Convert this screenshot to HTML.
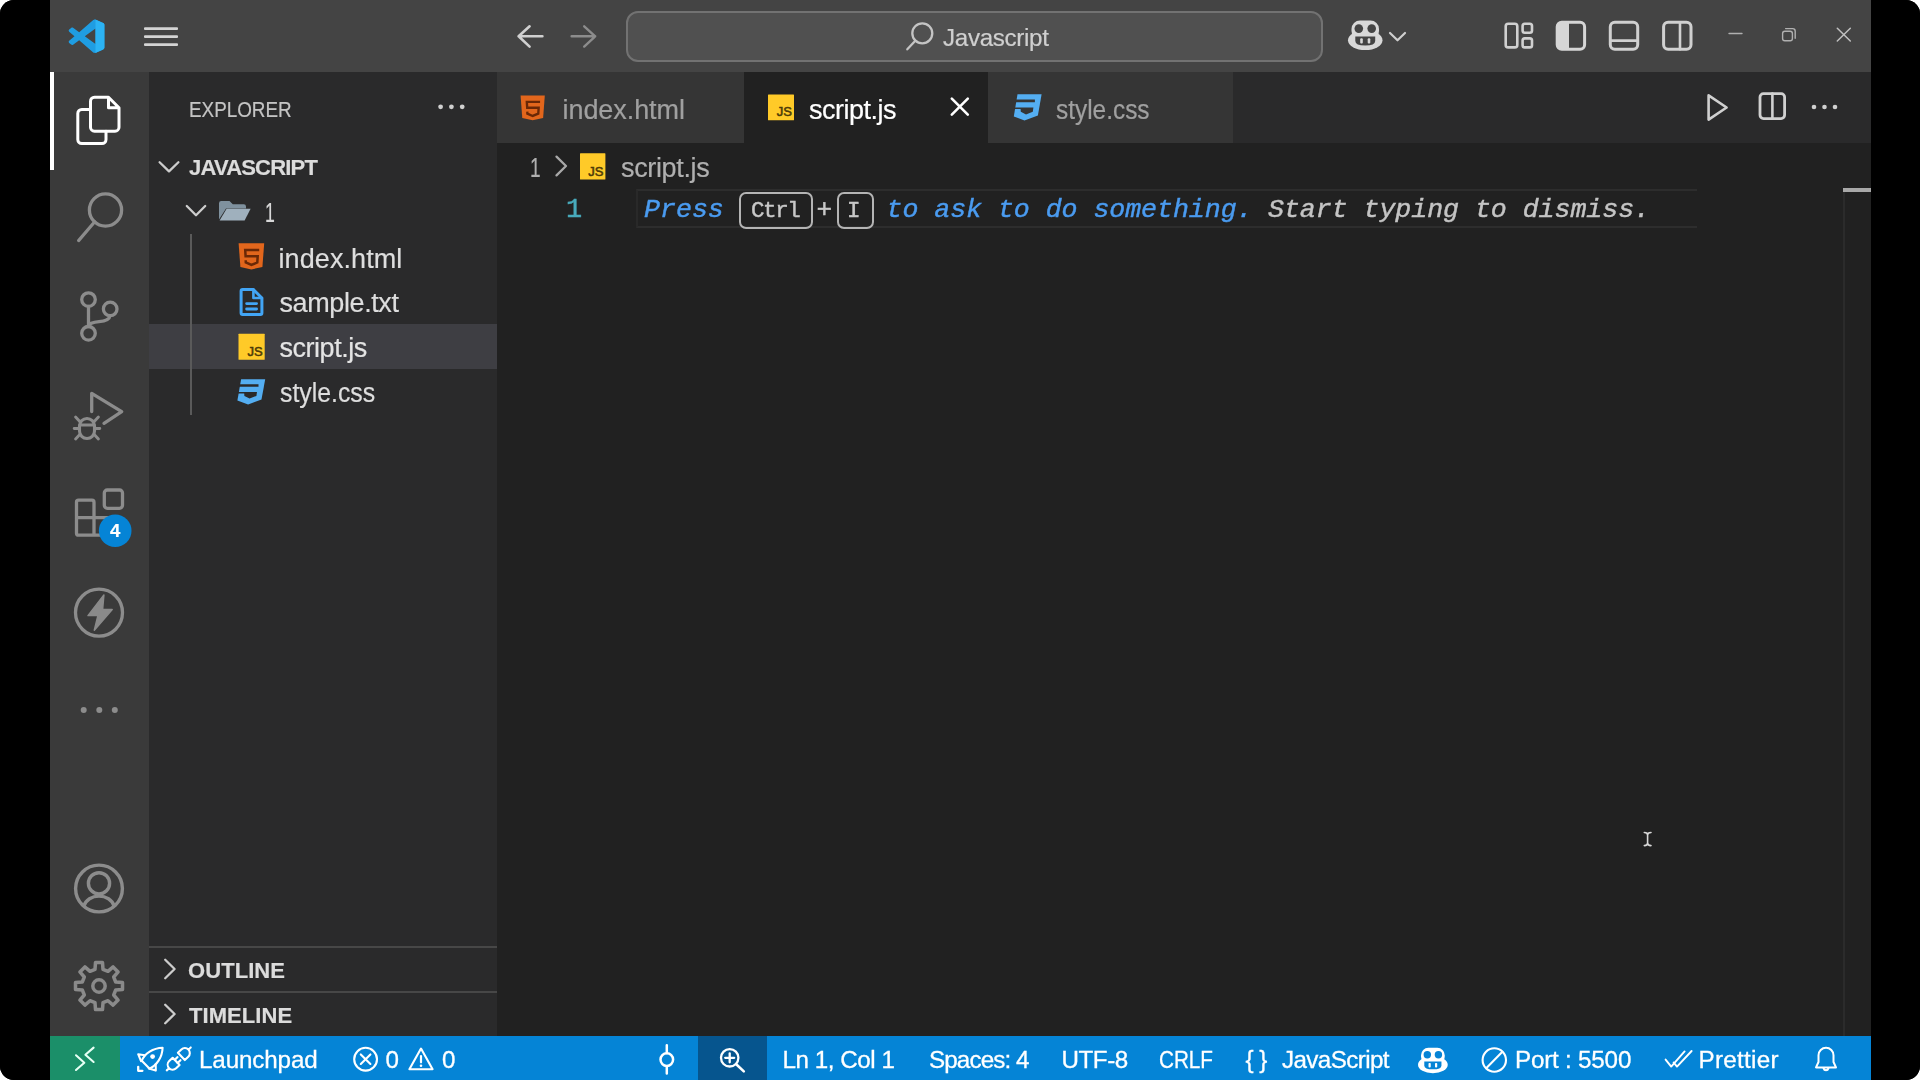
<!DOCTYPE html>
<html lang="en"><head><meta charset="utf-8"><title>script.js - Javascript - Visual Studio Code</title>
<style>
html,body{margin:0;padding:0;}
body{width:1920px;height:1080px;overflow:hidden;background:#fff;font-family:"Liberation Sans",sans-serif;}
#frame{position:absolute;left:0;top:0;width:1920px;height:1080px;background:#000;border-radius:14px;overflow:hidden;}
.abs{position:absolute;}
#titlebar{left:50px;top:0;width:1821px;height:72px;background:#444444;}
#search{left:625.5px;top:10.5px;width:693px;height:47px;border:2px solid #727272;border-radius:12px;background:#505050;}
#activity{left:50px;top:72px;width:99px;height:964px;background:#3a3a3a;}
#activeind{left:50px;top:72px;width:4px;height:98px;background:#fff;}
#sidebar{left:149px;top:72px;width:348px;height:964px;background:#2a2a2b;}
#selrow{left:149px;top:324px;width:348px;height:45px;background:#3e3e43;}
#guide{left:190px;top:234px;width:1.5px;height:181px;background:#5a5a5a;}
.sep{left:149px;width:348px;height:2px;background:#474747;}
#tabsbar{left:497px;top:72px;width:1374px;height:71px;background:#2a2a2b;}
.tab{top:72px;height:71px;background:#353535;}
#tabactive{left:744px;top:72px;width:244px;height:71px;background:#212121;}
#editor{left:497px;top:143px;width:1374px;height:893px;background:#212121;}
#curline{left:636px;top:189px;width:1059px;height:35px;border-top:2px solid #2d2d2d;border-bottom:2px solid #2d2d2d;border-left:2px solid #292929;}
#sbline{left:1842.5px;top:190px;width:2px;height:846px;background:#2b2b2b;}
#sbmark{left:1843px;top:188px;width:28px;height:4px;background:#a8a8a8;}
#status{left:50px;top:1036px;width:1821px;height:44px;background:#0584d6;}
#remote{left:50px;top:1036px;width:70px;height:44px;background:#1b8f69;}
#zoomitem{left:698px;top:1036px;width:69px;height:44px;background:#06558e;}
.kbd{border:2px solid #b4b4b4;border-radius:7px;box-sizing:border-box;}
#txt{position:absolute;left:0;top:0;width:1920px;height:1080px;will-change:transform;}
.t{position:absolute;white-space:nowrap;line-height:1em;-webkit-text-stroke:0.2px currentColor;}
.m{font-family:"Liberation Mono",monospace;-webkit-text-stroke:0.45px currentColor;}
.sb{-webkit-text-stroke:0.3px currentColor;}
#icons{position:absolute;left:0;top:0;}
</style></head>
<body>
<div id="frame">

<div id="titlebar" class="abs"></div>
<div id="search" class="abs"></div>
<div id="activity" class="abs"></div>
<div id="activeind" class="abs"></div>
<div id="sidebar" class="abs"></div>
<div id="selrow" class="abs"></div>
<div id="guide" class="abs"></div>
<div class="abs sep" style="top:946px"></div>
<div class="abs sep" style="top:991px"></div>
<div id="tabsbar" class="abs"></div>
<div class="abs tab" style="left:497px;width:247px"></div>
<div id="tabactive" class="abs"></div>
<div class="abs tab" style="left:988px;width:245px"></div>
<div id="editor" class="abs"></div>
<div id="curline" class="abs"></div>
<div id="sbline" class="abs"></div>
<div id="sbmark" class="abs"></div>
<div id="status" class="abs"></div>
<div id="remote" class="abs"></div>
<div id="zoomitem" class="abs"></div>
<div class="abs kbd" style="left:738.5px;top:191.5px;width:74.5px;height:37px"></div>
<div class="abs kbd" style="left:837px;top:191.5px;width:36.5px;height:37px"></div>

<svg id="icons" width="1920" height="1080" viewBox="0 0 1920 1080">
<g transform="translate(68.7 19.4) scale(0.357 0.337)"><path d="M70.9119 99.3171C72.4869 99.9307 74.2828 99.8914 75.8725 99.1264L96.4608 89.2197C98.6242 88.1787 100 85.9892 100 83.5872V16.4133C100 14.0113 98.6243 11.8218 96.4609 10.7808L75.8725 0.873756C73.7862 -0.130129 71.3446 0.11576 69.5135 1.44695C69.252 1.63711 69.0028 1.84943 68.769 2.08341L29.3551 38.0415L12.1872 25.0096C10.589 23.7965 8.35363 23.8959 6.86933 25.2461L1.36303 30.2549C-0.452552 31.9064 -0.454633 34.7627 1.35853 36.417L16.2471 50.0001L1.35853 63.5832C-0.454633 65.2374 -0.452552 68.0938 1.36303 69.7453L6.86933 74.7541C8.35363 76.1043 10.589 76.2037 12.1872 74.9905L29.3551 61.9587L68.769 97.9167C69.3925 98.5406 70.1246 99.0104 70.9119 99.3171ZM75.0152 27.2989L45.1091 50.0001L75.0152 72.7012V27.2989Z" fill="#1f9de2" fill-rule="evenodd"/><path d="M75 0.5 L96.46 10.78 C98.62 11.82 100 14 100 16.4 V83.6 C100 86 98.62 88.18 96.46 89.22 L75 99.5 Z" fill="#2cb3f4"/></g>
<rect x="144" y="27.3" width="34" height="2.6" rx="1" fill="#d4d4d4" stroke="none" stroke-width="0"/>
<rect x="144" y="35.300000000000004" width="34" height="2.6" rx="1" fill="#d4d4d4" stroke="none" stroke-width="0"/>
<rect x="144" y="43.300000000000004" width="34" height="2.6" rx="1" fill="#d4d4d4" stroke="none" stroke-width="0"/>
<path d="M542.4 36.3 H518.6 M529.6 26.3 L518.6 36.3 L529.6 46.6" fill="none" stroke="#d0d0d0" stroke-width="2.6" stroke-linecap="round" stroke-linejoin="round" />
<path d="M571.6 36.3 H595.2 M584.2 26.3 L595.2 36.3 L584.2 46.6" fill="none" stroke="#8c8c8c" stroke-width="2.4" stroke-linecap="round" stroke-linejoin="round" />
<circle cx="922.3" cy="33.3" r="10" fill="none" stroke="#c4c4c4" stroke-width="2.3"/>
<path d="M915.3 40.8 L907.3 49.3" fill="none" stroke="#c4c4c4" stroke-width="2.3" stroke-linecap="round" stroke-linejoin="round" />
<g transform="translate(1348 20.6) scale(1.0)"><rect x="3.5" y="0" width="27.5" height="19" rx="8.5" fill="#d8d8d8"/><ellipse cx="17.25" cy="19.6" rx="17.25" ry="9.8" fill="#d8d8d8"/><circle cx="10.8" cy="8" r="4.3" fill="#444444"/><circle cx="23.7" cy="8" r="4.3" fill="#444444"/><path d="M7.3 15.8 H27.2 V20.5 Q27.2 25 17.25 25 Q7.3 25 7.3 20.5 Z" fill="#444444"/><rect x="12.2" y="17.6" width="2.6" height="5.2" rx="1" fill="#d8d8d8"/><rect x="19.7" y="17.6" width="2.6" height="5.2" rx="1" fill="#d8d8d8"/></g>
<path d="M1390 33 L1397.5 40.3 L1405 33" fill="none" stroke="#cfcfcf" stroke-width="2.2" stroke-linecap="round" stroke-linejoin="round" />
<rect x="1505.7" y="23.8" width="11.6" height="23.6" rx="2.5" fill="none" stroke="#d0d0d0" stroke-width="2.6"/>
<rect x="1522.6" y="23.8" width="9.4" height="9" rx="2.2" fill="none" stroke="#d0d0d0" stroke-width="2.6"/>
<rect x="1522.6" y="38.4" width="9.4" height="9" rx="2.2" fill="none" stroke="#d0d0d0" stroke-width="2.6"/>
<rect x="1557.2" y="22.2" width="27.4" height="27" rx="4.5" fill="none" stroke="#d6d6d6" stroke-width="3"/>
<path d="M1561.5 22.2 H1569 V49.2 H1561.5 Q1557.2 49.2 1557.2 44.8 V26.6 Q1557.2 22.2 1561.5 22.2 Z" fill="#d6d6d6"/>
<rect x="1610.3" y="22.2" width="27.4" height="27" rx="4.5" fill="none" stroke="#d0d0d0" stroke-width="3"/>
<path d="M1610.3 40.6 H1637.7" fill="none" stroke="#d0d0d0" stroke-width="2.6" stroke-linecap="round" stroke-linejoin="round" />
<rect x="1663.6" y="22.2" width="27.4" height="27" rx="4.5" fill="none" stroke="#d0d0d0" stroke-width="3"/>
<path d="M1680 22.2 V49.2" fill="none" stroke="#d0d0d0" stroke-width="2.6" stroke-linecap="round" stroke-linejoin="round" />
<path d="M1729 33.5 H1742" fill="none" stroke="#b0b0b0" stroke-width="1.4" stroke-linecap="round" stroke-linejoin="round" />
<rect x="1782.6" y="31.2" width="9.8" height="9.6" rx="2.2" fill="none" stroke="#b0b0b0" stroke-width="1.4"/>
<path d="M1785.6 28.6 H1792.6 Q1795.2 28.6 1795.2 31.2 V38.2" fill="none" stroke="#b0b0b0" stroke-width="1.4" stroke-linecap="round" stroke-linejoin="round" />
<path d="M1837.3 28.2 L1850.3 41 M1850.3 28.2 L1837.3 41" fill="none" stroke="#c0c0c0" stroke-width="1.5" stroke-linecap="round" stroke-linejoin="round" />
<path d="M94.5 97.2 H108.5 L119 107.7 V127.2 A4 4 0 0 1 115 131.2 H94.5 A4 4 0 0 1 90.5 127.2 V101.2 A4 4 0 0 1 94.5 97.2 Z M108.5 97.2 V107.7 H119" fill="none" stroke="#ffffff" stroke-width="3" stroke-linecap="round" stroke-linejoin="round" />
<path d="M90.5 109.5 H81.8 A4 4 0 0 0 77.8 113.5 V139.5 A4 4 0 0 0 81.8 143.5 H102 A4 4 0 0 0 106 139.5 V131.2" fill="none" stroke="#ffffff" stroke-width="3" stroke-linecap="round" stroke-linejoin="round" />
<circle cx="105.5" cy="210" r="16.1" fill="none" stroke="#8c8c8c" stroke-width="3.3"/>
<path d="M94.7 221.8 L78.6 240.6" fill="none" stroke="#8c8c8c" stroke-width="3.2" stroke-linecap="round" stroke-linejoin="round" />
<circle cx="88.5" cy="299.6" r="6.8" fill="none" stroke="#8c8c8c" stroke-width="3.3"/>
<circle cx="110.2" cy="308.9" r="6.8" fill="none" stroke="#8c8c8c" stroke-width="3.3"/>
<circle cx="88.5" cy="333.3" r="6.8" fill="none" stroke="#8c8c8c" stroke-width="3.3"/>
<path d="M88.5 306.4 V326.5 M110 315.7 C109.5 320.5 104 321.3 99 321.6 C94 322 89.5 322.6 88.5 326" fill="none" stroke="#8c8c8c" stroke-width="3.3" stroke-linecap="round" stroke-linejoin="round" />
<path d="M91.7 411.5 V393.3 L121.7 411.7 L104 423.3" fill="none" stroke="#8c8c8c" stroke-width="3.3" stroke-linecap="round" stroke-linejoin="round" />
<path d="M79.5 428.5 V426 A7.5 7.5 0 0 1 94.5 426 V431 A7.5 7.5 0 0 1 79.5 431 Z M79.5 425 H94.5" fill="none" stroke="#8c8c8c" stroke-width="3.1" stroke-linecap="round" stroke-linejoin="round" />
<path d="M79.8 421.5 L75.6 417 M94.2 421.5 L98.4 417 M79 428.5 H74.2 M95 428.5 H99.8 M79.8 434.5 L75.6 439 M94.2 434.5 L98.4 439" fill="none" stroke="#8c8c8c" stroke-width="2.9" stroke-linecap="round" stroke-linejoin="round" />
<path d="M78.5 500.2 H92 Q94 500.2 94 502.2 V517.7 H109.5 Q111.5 517.7 111.5 519.7 V533.2 Q111.5 535.2 109.5 535.2 H78.5 Q76.5 535.2 76.5 533.2 V502.2 Q76.5 500.2 78.5 500.2 Z M76.5 517.7 H94 V535.2" fill="none" stroke="#8c8c8c" stroke-width="3.3" stroke-linecap="round" stroke-linejoin="round" />
<rect x="104.3" y="490" width="18.2" height="18.3" rx="3" fill="none" stroke="#8c8c8c" stroke-width="3.3"/>
<circle cx="115.2" cy="530.7" r="16.3" fill="#0584d6" stroke="none" stroke-width="0"/>
<circle cx="99" cy="612.6" r="23.5" fill="none" stroke="#8c8c8c" stroke-width="3.3"/>
<path d="M103.9 595 L88 615.6 H97.9 L94.3 630.2 L112.2 609.6 H102.6 Z" fill="#8a8a8a" stroke="#8a8a8a" stroke-width="1.5" stroke-linejoin="round"/>
<circle cx="83.7" cy="710" r="3" fill="#8c8c8c" stroke="none" stroke-width="0"/>
<circle cx="99.3" cy="710" r="3" fill="#8c8c8c" stroke="none" stroke-width="0"/>
<circle cx="114.8" cy="710" r="3" fill="#8c8c8c" stroke="none" stroke-width="0"/>
<circle cx="99" cy="888.5" r="23.4" fill="none" stroke="#8c8c8c" stroke-width="3.4"/>
<circle cx="99" cy="883.3" r="10.6" fill="none" stroke="#8c8c8c" stroke-width="3.4"/>
<path d="M84 905.8 A15.5 13 0 0 1 114 905.8" fill="none" stroke="#8c8c8c" stroke-width="3.4" stroke-linecap="round" stroke-linejoin="round" />
<path d="M95.0 969.3 L95.5 962.5 L102.5 962.5 L103.0 969.3 L108.0 971.3 L113.1 966.9 L118.1 971.9 L113.7 977.0 L115.7 982.0 L122.5 982.5 L122.5 989.5 L115.7 990.0 L113.7 995.0 L118.1 1000.1 L113.1 1005.1 L108.0 1000.7 L103.0 1002.7 L102.5 1009.5 L95.5 1009.5 L95.0 1002.7 L90.0 1000.7 L84.9 1005.1 L79.9 1000.1 L84.3 995.0 L82.3 990.0 L75.5 989.5 L75.5 982.5 L82.3 982.0 L84.3 977.0 L79.9 971.9 L84.9 966.9 L90.0 971.3 Z" fill="none" stroke="#8a8a8a" stroke-width="3.5" stroke-linecap="round" stroke-linejoin="round" /><circle cx="99" cy="986" r="6.2" fill="none" stroke="#8a8a8a" stroke-width="3.5"/>
<circle cx="440.6" cy="106.8" r="2.4" fill="#d0d0d0" stroke="none" stroke-width="0"/>
<circle cx="451.4" cy="106.8" r="2.4" fill="#d0d0d0" stroke="none" stroke-width="0"/>
<circle cx="462.2" cy="106.8" r="2.4" fill="#d0d0d0" stroke="none" stroke-width="0"/>
<path d="M159.6 162.2 L169 171.4 L178.4 162.2" fill="none" stroke="#cccccc" stroke-width="2.3" stroke-linecap="round" stroke-linejoin="round" />
<path d="M186.8 206 L196 215.2 L205.2 206" fill="none" stroke="#cccccc" stroke-width="2.3" stroke-linecap="round" stroke-linejoin="round" />
<path d="M165.2 959.8 L174.6 969 L165.2 978.2" fill="none" stroke="#cccccc" stroke-width="2.3" stroke-linecap="round" stroke-linejoin="round" />
<path d="M165.2 1004.8 L174.6 1014 L165.2 1023.2" fill="none" stroke="#cccccc" stroke-width="2.3" stroke-linecap="round" stroke-linejoin="round" />
<path d="M219 203.2 Q219 201 221.2 201 H229.5 L232.8 204.3 H243.8 Q246 204.3 246 206.5 V208.6 H226 L219 219.5 Z" fill="#7f919e"/>
<path d="M226.6 208.8 H250.6 L244.6 220.6 H219.6 Z" fill="#9fb0bd"/>
<g transform="translate(238 242) scale(1.0000 1.0000)"><path d="M0.6 1.2 H26.2 L24.4 25 L13.4 27.4 L2.4 25 Z" fill="#e2661c"/><path d="M21.2 8 H7.2 L7.6 14.2 H19.7 L19.3 20.5 L13.4 22.9 L7.8 20.5 L7.7 18.3" fill="none" stroke="#6a2806" stroke-width="2.5" stroke-linejoin="miter"/></g>
<path d="M242.6 289.5 H253.4 L261.9 298 V313 Q261.9 314.5 260.4 314.5 H242.6 Q241.1 314.5 241.1 313 V291 Q241.1 289.5 242.6 289.5 Z" fill="none" stroke="#42a5f5" stroke-width="3" stroke-linecap="round" stroke-linejoin="round" /><path d="M253.4 289.5 V298 H261.9" fill="none" stroke="#42a5f5" stroke-width="2.6" stroke-linecap="round" stroke-linejoin="round" /><path d="M246.6 303.6 H256.6 M246.6 309 H256.6" fill="none" stroke="#42a5f5" stroke-width="2.8" stroke-linecap="round" stroke-linejoin="round" />
<rect x="238.5" y="333.8" width="26.2" height="26" rx="0.5" fill="#ffca28" stroke="none" stroke-width="0"/><text x="262.7" y="355.8" text-anchor="end" font-family="Liberation Sans, sans-serif" font-size="13" fill="#4d3b08" stroke="#4d3b08" stroke-width="0.55">JS</text>
<g transform="translate(237 379) scale(1.0000 1.0000)"><path d="M4.1 0.3 H28.2 L24.5 20.6 L11.1 25.4 L0.4 21.4 Z" fill="#54aef2"/><path d="M2.2 5.3 H21.5 V7.8 H1.8 Z" fill="#2a2a2b"/><path d="M0.8 13 H20 L19.4 16.9 L12.6 19.6 L7.4 16.9 L7.2 14.4 H0.6 Z" fill="#2a2a2b"/></g>
<g transform="translate(520 94.4) scale(0.9470 0.9416)"><path d="M0.6 1.2 H26.2 L24.4 25 L13.4 27.4 L2.4 25 Z" fill="#e2661c"/><path d="M21.2 8 H7.2 L7.6 14.2 H19.7 L19.3 20.5 L13.4 22.9 L7.8 20.5 L7.7 18.3" fill="none" stroke="#6a2806" stroke-width="2.5" stroke-linejoin="miter"/></g>
<rect x="768" y="94.6" width="26" height="25.6" rx="0.5" fill="#ffca28" stroke="none" stroke-width="0"/><text x="792" y="116.19999999999999" text-anchor="end" font-family="Liberation Sans, sans-serif" font-size="13" fill="#4d3b08" stroke="#4d3b08" stroke-width="0.55">JS</text>
<g transform="translate(1013.4 94) scale(1.0000 1.0472)"><path d="M4.1 0.3 H28.2 L24.5 20.6 L11.1 25.4 L0.4 21.4 Z" fill="#54aef2"/><path d="M2.2 5.3 H21.5 V7.8 H1.8 Z" fill="#353535"/><path d="M0.8 13 H20 L19.4 16.9 L12.6 19.6 L7.4 16.9 L7.2 14.4 H0.6 Z" fill="#353535"/></g>
<path d="M951.8 98.6 L967.8 114.6 M967.8 98.6 L951.8 114.6" fill="none" stroke="#ffffff" stroke-width="2.6" stroke-linecap="round" stroke-linejoin="round" />
<path d="M1708.6 95.4 L1726.6 107.5 L1708.6 119.6 Z" fill="none" stroke="#d0d0d0" stroke-width="2.6" stroke-linecap="round" stroke-linejoin="round" />
<rect x="1760" y="93.6" width="24.6" height="25" rx="3.5" fill="none" stroke="#d0d0d0" stroke-width="2.8"/>
<path d="M1772.4 93.6 V118.6" fill="none" stroke="#d0d0d0" stroke-width="2.6" stroke-linecap="round" stroke-linejoin="round" />
<circle cx="1814" cy="107" r="2.3" fill="#d0d0d0" stroke="none" stroke-width="0"/>
<circle cx="1824.5" cy="107" r="2.3" fill="#d0d0d0" stroke="none" stroke-width="0"/>
<circle cx="1835" cy="107" r="2.3" fill="#d0d0d0" stroke="none" stroke-width="0"/>
<path d="M556.5 156.6 L566 166 L556.5 175.4" fill="none" stroke="#a8a8a8" stroke-width="2.3" stroke-linecap="round" stroke-linejoin="round" />
<rect x="580" y="153.2" width="25.4" height="26.4" rx="0.5" fill="#ffca28" stroke="none" stroke-width="0"/><text x="603.4" y="175.6" text-anchor="end" font-family="Liberation Sans, sans-serif" font-size="13" fill="#4d3b08" stroke="#4d3b08" stroke-width="0.55">JS</text>
<path d="M1644.3 832.5 Q1647.6 832.5 1647.6 835 V843 Q1647.6 845.6 1644.3 845.6 M1651 832.5 Q1647.6 832.5 1647.6 835 M1651 845.6 Q1647.6 845.6 1647.6 843" fill="none" stroke="#d8d8d8" stroke-width="1.6" stroke-linecap="round" stroke-linejoin="round" />
<path d="M76 1055.3 L84.3 1062.7 L76 1070" fill="none" stroke="#e6fff4" stroke-width="2.1" stroke-linecap="round" stroke-linejoin="round" />
<path d="M93.6 1047.6 L85.4 1054.8 L93.6 1062" fill="none" stroke="#e6fff4" stroke-width="2.1" stroke-linecap="round" stroke-linejoin="round" />
<path d="M162.6 1047.7 C153 1048 144.6 1053.4 141.8 1060.7 L149.4 1068.6 C156.6 1065.6 162.3 1057.4 162.6 1047.7 Z" fill="none" stroke="#ffffff" stroke-width="2.1" stroke-linecap="round" stroke-linejoin="round" />
<circle cx="152.6" cy="1056.6" r="2.4" fill="#ffffff" stroke="none" stroke-width="0"/>
<path d="M144.8 1055.2 L138.2 1054.2 L141 1061.2 M155.7 1064.4 L155.8 1070.6 L148.8 1068.6" fill="none" stroke="#ffffff" stroke-width="2.1" stroke-linecap="round" stroke-linejoin="round" />
<path d="M138.2 1066.8 V1070.8 H142.4" fill="none" stroke="#ffffff" stroke-width="2.3" stroke-linecap="round" stroke-linejoin="round" />
<g transform="translate(178.75 1058.9) rotate(-43.7)" fill="none" stroke="#ffffff" stroke-width="2.1" stroke-linecap="round" stroke-linejoin="round"><path d="M3.6 -5 H8.4 A5 5 0 0 1 8.4 5 H3.6 Z M13.4 0 H16.6"/><path d="M-3.6 -5 H-8.4 A5 5 0 0 0 -8.4 5 H-3.6 Z M-13.4 0 H-16.6"/><path d="M-3.6 -2.1 H0.4 M-3.6 2.1 H0.4"/></g>
<circle cx="365.6" cy="1059.2" r="11.4" fill="none" stroke="#ffffff" stroke-width="2.1"/>
<path d="M360.8 1054.4 L370.4 1064 M370.4 1054.4 L360.8 1064" fill="none" stroke="#ffffff" stroke-width="2.1" stroke-linecap="round" stroke-linejoin="round" />
<path d="M421 1048.6 L432.6 1069.2 H409.4 Z" fill="none" stroke="#ffffff" stroke-width="2.1" stroke-linecap="round" stroke-linejoin="round" />
<path d="M421 1056 V1062.3" fill="none" stroke="#ffffff" stroke-width="2.2" stroke-linecap="round" stroke-linejoin="round" />
<circle cx="421" cy="1065.7" r="1.3" fill="#ffffff" stroke="none" stroke-width="0"/>
<circle cx="666.8" cy="1059.6" r="6.3" fill="none" stroke="#ffffff" stroke-width="2.5"/>
<path d="M666.8 1045.2 V1053 M666.8 1066.2 V1073.4" fill="none" stroke="#ffffff" stroke-width="2.5" stroke-linecap="round" stroke-linejoin="round" />
<circle cx="729.7" cy="1057.8" r="8.7" fill="none" stroke="#ffffff" stroke-width="2.3"/>
<path d="M725.2 1057.8 H734.2 M729.7 1053.3 V1062.3" fill="none" stroke="#ffffff" stroke-width="2.3" stroke-linecap="round" stroke-linejoin="round" />
<path d="M736.2 1064.3 L743.8 1071.4" fill="none" stroke="#ffffff" stroke-width="2.6" stroke-linecap="round" stroke-linejoin="round" />
<g transform="translate(1418 1047.8) scale(0.862)"><rect x="3.5" y="0" width="27.5" height="19" rx="8.5" fill="#ffffff"/><ellipse cx="17.25" cy="19.6" rx="17.25" ry="9.8" fill="#ffffff"/><circle cx="10.8" cy="8" r="4.3" fill="#0584d6"/><circle cx="23.7" cy="8" r="4.3" fill="#0584d6"/><path d="M7.3 15.8 H27.2 V20.5 Q27.2 25 17.25 25 Q7.3 25 7.3 20.5 Z" fill="#0584d6"/><rect x="12.2" y="17.6" width="2.6" height="5.2" rx="1" fill="#ffffff"/><rect x="19.7" y="17.6" width="2.6" height="5.2" rx="1" fill="#ffffff"/></g>
<circle cx="1494.3" cy="1060" r="11.7" fill="none" stroke="#ffffff" stroke-width="2.1"/>
<path d="M1486.2 1068.2 L1502.4 1051.8" fill="none" stroke="#ffffff" stroke-width="2.1" stroke-linecap="round" stroke-linejoin="round" />
<path d="M1665.6 1059.6 L1671.2 1066.6 L1684.6 1051.4 M1673.6 1062.4 L1677 1066.6 L1691.6 1051" fill="none" stroke="#ffffff" stroke-width="1.9" stroke-linecap="round" stroke-linejoin="round" />
<path d="M1816 1067.4 H1836 L1833.5 1062 V1055.3 A7.5 7.5 0 0 0 1818.5 1055.3 V1062 Z" fill="none" stroke="#ffffff" stroke-width="2" stroke-linecap="round" stroke-linejoin="round" />
<path d="M1823.6 1068.4 A2.5 2.5 0 0 0 1828.4 1068.4" fill="none" stroke="#ffffff" stroke-width="2" stroke-linecap="round" stroke-linejoin="round" />
</svg>
<div id="txt">
<span class="t" style="left:943.00px;top:25.61px;font-size:24.2px;color:#cfcfcf;letter-spacing:-0.333px;">Javascript</span>
<span class="t" style="left:189.00px;top:98.61px;font-size:22px;color:#c4c4c4;transform:scaleX(0.8565);transform-origin:0 0;">EXPLORER</span>
<span class="t" style="left:189.00px;top:156.70px;font-size:22px;color:#dcdcdc;letter-spacing:-0.800px;font-weight:bold;">JAVASCRIPT</span>
<span class="t" style="left:265.00px;top:199.60px;font-size:27px;color:#d8d8d8;transform:scaleX(0.6549);transform-origin:0 0;">1</span>
<span class="t" style="left:278.50px;top:245.51px;font-size:27px;color:#dedede;letter-spacing:0.089px;">index.html</span>
<span class="t" style="left:279.50px;top:290.21px;font-size:27px;color:#dedede;letter-spacing:-0.400px;">sample.txt</span>
<span class="t" style="left:279.50px;top:335.41px;font-size:27px;color:#e4e4e4;letter-spacing:-0.475px;">script.js</span>
<span class="t" style="left:279.50px;top:380.31px;font-size:27px;color:#dedede;transform:scaleX(0.9196);transform-origin:0 0;">style.css</span>
<span class="t" style="left:188.00px;top:960.41px;font-size:22px;color:#dcdcdc;letter-spacing:0.067px;font-weight:bold;">OUTLINE</span>
<span class="t" style="left:189.00px;top:1005.31px;font-size:22px;color:#dcdcdc;letter-spacing:0.057px;font-weight:bold;">TIMELINE</span>
<span class="t" style="left:562.50px;top:96.81px;font-size:27px;color:#a0a0a0;letter-spacing:-0.067px;">index.html</span>
<span class="t" style="left:809.00px;top:96.81px;font-size:27px;color:#ffffff;letter-spacing:-0.500px;">script.js</span>
<span class="t" style="left:1056.00px;top:96.81px;font-size:27px;color:#a0a0a0;transform:scaleX(0.9039);transform-origin:0 0;">style.css</span>
<span class="t" style="left:530.00px;top:155.01px;font-size:27px;color:#b0b0b0;transform:scaleX(0.7078);transform-origin:0 0;">1</span>
<span class="t" style="left:621.00px;top:155.01px;font-size:27px;color:#b0b0b0;letter-spacing:-0.350px;">script.js</span>
<span class="t m" style="left:566.00px;top:197.21px;font-size:27px;color:#48aabb;">1</span>
<span class="t m" style="left:644.00px;top:197.21px;font-size:26.6px;color:#4a9bf0;font-style:italic;">Press</span>
<span class="t m" style="left:751.00px;top:200.01px;font-size:22.5px;color:#c8c8c8;letter-spacing:-1.400px;">Ctrl</span>
<span class="t m" style="left:816.50px;top:197.01px;font-size:26px;color:#c8c8c8;">+</span>
<span class="t m" style="left:847.00px;top:200.01px;font-size:22.5px;color:#c8c8c8;">I</span>
<span class="t m" style="left:886.50px;top:197.21px;font-size:26.6px;color:#4a9bf0;letter-spacing:-0.045px;font-style:italic;">to ask to do something.</span>
<span class="t m" style="left:1268.00px;top:197.21px;font-size:26.6px;color:#c4c4c4;letter-spacing:-0.043px;font-style:italic;">Start typing to dismiss.</span>
<span class="t sb" style="left:199.00px;top:1048.42px;font-size:24.2px;color:#ffffff;letter-spacing:-0.125px;">Launchpad</span>
<span class="t sb" style="left:385.50px;top:1048.42px;font-size:24.2px;color:#ffffff;">0</span>
<span class="t sb" style="left:442.00px;top:1048.42px;font-size:24.2px;color:#ffffff;">0</span>
<span class="t sb" style="left:782.50px;top:1048.42px;font-size:24.2px;color:#ffffff;letter-spacing:-0.460px;">Ln 1, Col 1</span>
<span class="t sb" style="left:929.00px;top:1048.42px;font-size:24.2px;color:#ffffff;letter-spacing:-0.875px;">Spaces: 4</span>
<span class="t sb" style="left:1061.50px;top:1048.42px;font-size:24.2px;color:#ffffff;letter-spacing:-0.450px;">UTF-8</span>
<span class="t sb" style="left:1159.00px;top:1048.42px;font-size:24.2px;color:#ffffff;transform:scaleX(0.8550);transform-origin:0 0;">CRLF</span>
<span class="t sb" style="left:1245.50px;top:1048.42px;font-size:24.2px;color:#ffffff;letter-spacing:-0.500px;">{ }</span>
<span class="t sb" style="left:1282.00px;top:1048.42px;font-size:24.2px;color:#ffffff;letter-spacing:-0.600px;">JavaScript</span>
<span class="t sb" style="left:1515.00px;top:1048.42px;font-size:24.2px;color:#ffffff;letter-spacing:-0.200px;">Port : 5500</span>
<span class="t sb" style="left:1698.50px;top:1048.42px;font-size:24.2px;color:#ffffff;letter-spacing:0.286px;">Prettier</span>
<span class="t" style="left:110.00px;top:522.20px;font-size:18.5px;color:#ffffff;font-weight:bold;">4</span>
</div>
<div class="abs" style="left:0;top:0;width:50px;height:1080px;background:#000"></div>
<div class="abs" style="left:1871px;top:0;width:49px;height:1080px;background:#000"></div>
</div>
</body></html>
